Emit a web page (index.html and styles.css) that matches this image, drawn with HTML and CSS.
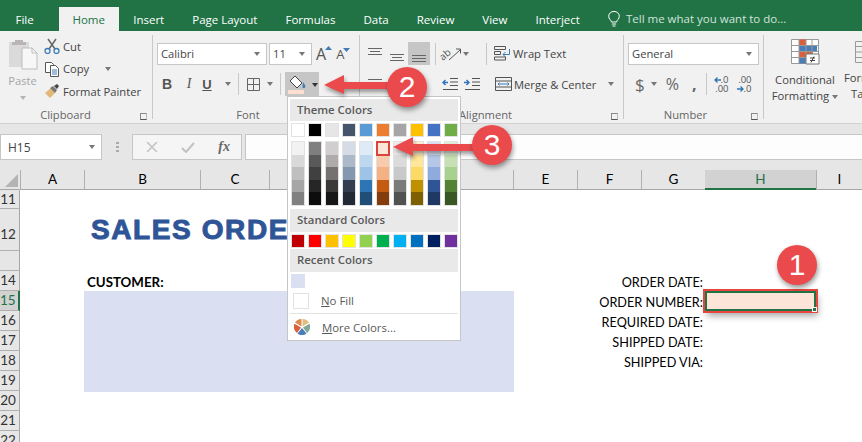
FILE: index.html
```html
<!DOCTYPE html>
<html lang="en">
<head>
  <meta charset="UTF-8">
  <title>Sales Order - Excel</title>
  <link rel="stylesheet" href="styles.css">
</head>
<body>
  <div class="tabs">
    <span class="tab tab-file">File</span>
    <span class="tab tab-home">Home</span>
    <span class="tab">Insert</span>
    <span class="tab">Page Layout</span>
    <span class="tab">Formulas</span>
    <span class="tab">Data</span>
    <span class="tab">Review</span>
    <span class="tab">View</span>
    <span class="tab">Interject</span>
    <span class="tell">
      <svg width="12" height="16" viewBox="0 0 12 16" fill="none" stroke="#fff"><path d="M3.5 11C3 9 .7 8 .7 5.2a5.3 4.8 0 0 1 10.6 0C11.300 8 9 9 8.500 11zM3.800 13h4.400M4.500 15h3"/></svg>
      Tell me what you want to do...
    </span>
  </div>

  <div class="ribbon">
    <!-- Clipboard -->
    <div class="group group-clipboard">
      <div class="group-body clip-body">
        <div class="paste">
          <svg width="30" height="32" viewBox="0 0 30 32"><path d="M1 4h20v25H1z" fill="#dcd9da"/><path d="M7 2h8v2h3v3H4V4h3z" fill="#b9b5b6"/><path d="M14 10h10l5 5v16H14z" fill="#f8f7f8" stroke="#bdbdbd"/><path d="M24 10v5h5" fill="none" stroke="#bdbdbd"/></svg>
          <span class="paste-text">Paste</span>
          <i class="caret caret-light"></i>
        </div>
        <div class="clip-list">
          <div class="clip-item">
            <svg width="16" height="16" viewBox="0 0 16 16" fill="none"><path d="M4 1l7 10M12 1L5 11" stroke="#666" stroke-width="1.500"/><circle cx="3.500" cy="13" r="2.500" stroke="#3f7cb8" stroke-width="1.300"/><circle cx="12.500" cy="13" r="2.500" stroke="#3f7cb8" stroke-width="1.300"/></svg>
            <span>Cut</span>
          </div>
          <div class="clip-item">
            <svg width="16" height="16" viewBox="0 0 16 16" fill="#fff" stroke="#555"><path d="M1.500 1.500h6l2 2v8h-8z"/><path d="M6.500 4.500h5l3 3v8h-8z"/><path d="M8 9h5M8 11h5M8 13h5" stroke="#3f7cb8"/></svg>
            <span>Copy</span>
            <i class="caret copy-caret"></i>
          </div>
          <div class="clip-item">
            <svg width="16" height="16" viewBox="0 0 16 16"><path d="M1 10l6-5 4 5-5 5z" fill="#e3b777"/><path d="M6 5l3-2 4 4-2 3z" fill="#777"/><path d="M10 3l3-2 2 2-2 3z" fill="#444"/></svg>
            <span>Format Painter</span>
          </div>
        </div>
      </div>
      <div class="group-label">Clipboard<i class="launcher"></i></div>
    </div>

    <!-- Font -->
    <div class="group group-font">
      <div class="group-body">
        <div class="row row-top">
          <div class="combo combo-font"><span>Calibri</span><i class="caret"></i></div>
          <div class="combo combo-size"><span>11</span><i class="caret"></i></div>
          <span class="grow-a big">A<svg class="tick" width="7" height="4" viewBox="0 0 7 4"><path d="M0 4l3.500-4L7 4z" fill="#3f7cb8"/></svg></span>
          <span class="grow-a small">A<svg class="tick" width="7" height="4" viewBox="0 0 7 4"><path d="M0 0l3.500 4L7 0z" fill="#3f7cb8"/></svg></span>
        </div>
        <div class="row row-bottom">
          <b class="fmt fmt-b">B</b>
          <i class="fmt fmt-i">I</i>
          <u class="fmt fmt-u">U</u>
          <i class="caret fmt-caret"></i>
          <span class="vsep sep-a"></span>
          <svg class="borders" width="13" height="13" viewBox="0 0 13 13" fill="none" stroke="#666"><path d="M.5.500h12v12H.5zM6.500.500v12M.5 6.500h12"/></svg>
          <i class="caret border-caret"></i>
          <span class="vsep sep-b"></span>
          <div class="fill-btn">
            <svg width="19" height="20" viewBox="0 0 19 20"><path d="M7 1l7 7-5 5-7-7z" fill="#fff" stroke="#444"/><path d="M15 7c2 3 3 4 2 5.500s-3 .5-2.500-1z" fill="#3f7cb8"/><path d="M0 15h16v4H0z" fill="#fbe0d2"/></svg>
            <i class="caret caret-dark"></i>
          </div>
        </div>
      </div>
      <div class="group-label label-font">Font</div>
    </div>

    <!-- Alignment -->
    <div class="group group-align">
      <div class="group-body">
        <div class="row row-top">
          <svg class="lines lines-top" width="14" height="8" viewBox="0 0 14 8" fill="none" stroke="#666"><path d="M0 .5h14M2 3.500h10M0 6.500h14"/></svg>
          <svg class="lines lines-mid" width="14" height="8" viewBox="0 0 14 8" fill="none" stroke="#666"><path d="M0 .5h14M2 3.500h10M0 6.500h14"/></svg>
          <div class="align-on"><svg width="14" height="7" viewBox="0 0 14 7" fill="none" stroke="#666"><path d="M0 .5h14M0 3.500h14M0 6.500h14"/></svg></div>
          <span class="vsep sep-c"></span>
          <svg class="orient" width="20" height="17" viewBox="0 0 20 17" fill="none" stroke="#555"><text x="0" y="14" transform="rotate(-40 3 14)" font-family="Open Sans, sans-serif" font-size="10" fill="#555" stroke="none">ab</text><path d="M7 15L18 5M14 4h4.500v4.500"/></svg>
          <i class="caret orient-caret"></i>
          <span class="vsep sep-d"></span>
          <svg class="wide-icon" width="17" height="15" viewBox="0 0 17 15" fill="none" stroke="#555"><path d="M.5.500h11v3H.5zM.5 5.500h6v3h-6zM.5 11h11v3H.5z"/><path d="M15.500 3v5.500H9m2.500-2.500L9 8.500l2.500 2.500" stroke="#3f7cb8"/></svg>
          <span class="action">Wrap Text</span>
        </div>
        <div class="row row-bottom">
          <svg class="lines lines-left" width="14" height="8" viewBox="0 0 14 8" fill="none" stroke="#666"><path d="M0 .5h14"/></svg>
          <svg class="indent" width="16" height="12" viewBox="0 0 16 12" fill="none" stroke="#555"><path d="M8 .5h8M8 4h8M8 7.500h8M1 11.500h15"/><path d="M6 4.500H1m2.500-2.500L1 4.500 3.500 7" stroke="#2e75b6" stroke-width="1.400"/></svg>
          <svg class="indent indent-two" width="16" height="12" viewBox="0 0 16 12" fill="none" stroke="#555"><path d="M8 .5h8M8 4h8M8 7.500h8M1 11.500h15"/><path d="M0 4.500h5m-2.500-2.500L5 4.500 2.500 7" stroke="#2e75b6" stroke-width="1.400"/></svg>
          <svg class="wide-icon merge" width="17" height="14" viewBox="0 0 17 14" fill="none" stroke="#555"><path d="M.5.500h16v13H.5zM.5 4h16M.5 10h16"/><path d="M3 7h11M4.500 5.500L3 7l1.500 1.500M12.500 5.500L14 7l-1.500 1.500" stroke="#3f7cb8"/></svg>
          <span class="action">Merge &amp; Center</span>
          <i class="caret merge-caret"></i>
        </div>
      </div>
      <div class="group-label label-align">Alignment<i class="launcher"></i></div>
    </div>

    <!-- Number -->
    <div class="group group-number">
      <div class="group-body">
        <div class="row row-top">
          <div class="combo combo-general"><span>General</span><i class="caret"></i></div>
        </div>
        <div class="row row-bottom">
          <span class="num-dollar">$</span>
          <i class="caret dollar-caret"></i>
          <span class="num-percent">%</span>
          <span class="num-comma">,</span>
          <span class="vsep sep-e"></span>
          <span class="dec">
            <span><svg width="7" height="6" viewBox="0 0 7 6" fill="none" stroke="#2e75b6" stroke-width="1.300"><path d="M7 3H1m2.500-2.500L1 3l2.500 2.500"/></svg>.0</span>
            <span>.00</span>
          </span>
          <span class="dec dec-two">
            <span>.00</span>
            <span><svg width="7" height="6" viewBox="0 0 7 6" fill="none" stroke="#2e75b6" stroke-width="1.300"><path d="M0 3h6M3.500.5L6 3 3.500 5.500"/></svg>.0</span>
          </span>
        </div>
      </div>
      <div class="group-label label-number">Number<i class="launcher"></i></div>
    </div>

    <!-- Styles, cut off by the window -->
    <div class="group-styles">
      <div class="style-btn">
        <svg width="29" height="26" viewBox="0 0 29 26"><path d="M.5.500h27v24H.5z" fill="#fff" stroke="#999"/><path d="M8 .5h7v6H8z" fill="#d9603b"/><path d="M8 6.500h18v6H8z" fill="#4a7eb8"/><path d="M8 12.500h14v6H8z" fill="#d9603b"/><path d="M8 18.500h7v6H8z" fill="#4a7eb8"/><path d="M.5 6.500h27M.5 12.500h27M.5 18.500h27M8 .5v24M15 .5v24M21 .5v24" stroke="#999" fill="none"/><path d="M15 15h13v10H15z" fill="#fff" stroke="#777"/><path d="M19 19h5M19 21.500h5M23 17.500l-3 6" stroke="#444" fill="none"/></svg>
        <span>Conditional</span>
        <span>Formatting<i class="caret style-caret"></i></span>
      </div>
      <div class="style-btn style-next">
        <svg width="29" height="22" viewBox="0 0 29 22" fill="none" stroke="#999"><path d="M.5.500h28v21H.5zM.5 5.500h28M.5 11h28M.5 16.500h28M8 .5v21"/></svg>
        <span>Form</span>
        <span class="table-word">Ta</span>
      </div>
    </div>
  </div>

  <div class="formula-bar">
    <div class="name-box"><span>H15</span><i class="caret"></i></div>
    <div class="grip"></div>
    <div class="fx-box">
      <svg width="12" height="10" viewBox="0 0 12 10" fill="none" stroke="#c4c4c4" stroke-width="1.600"><path d="M1 0l10 10M11 0L1 10"/></svg>
      <svg width="14" height="11" viewBox="0 0 14 11" fill="none" stroke="#c4c4c4" stroke-width="2.200"><path d="M1 6l4 4 8-9"/></svg>
      <em class="fx">fx</em>
    </div>
    <div class="formula-input"></div>
  </div>

  <div class="sheet">
    <div class="corner"><svg width="13" height="13" viewBox="0 0 13 13"><path d="M13 0v13H0z" fill="#b4b4b4"/></svg></div>
    <div class="col-head">A</div>
    <div class="col-head">B</div>
    <div class="col-head">C</div>
    <div class="col-head"></div>
    <div class="col-head">E</div>
    <div class="col-head">F</div>
    <div class="col-head">G</div>
    <div class="col-head col-on">H</div>
    <div class="col-head">I</div>

    <div class="row-head r11">11</div>
    <div class="row-head r12">12</div>
    <div class="row-head r13"></div>
    <div class="row-head r14">14</div>
    <div class="row-head r15 row-on">15</div>
    <div class="row-head r16">16</div>
    <div class="row-head r17">17</div>
    <div class="row-head r18">18</div>
    <div class="row-head r19">19</div>
    <div class="row-head r20">20</div>
    <div class="row-head r21">21</div>
    <div class="row-head r22">22</div>

    <div class="title">SALES ORDER</div>
    <div class="customer">CUSTOMER:</div>
    <div class="customer-fill"></div>
    <div class="field r14">ORDER DATE:</div>
    <div class="field r15">ORDER NUMBER:</div>
    <div class="field r16">REQUIRED DATE:</div>
    <div class="field r17">SHIPPED DATE:</div>
    <div class="field r18">SHIPPED VIA:</div>
    <div class="selected"><i class="handle"></i></div>
  </div>

  <!-- Fill colour dropdown -->
  <div class="menu">
    <div class="menu-head">Theme Colors</div>
    <div class="swatches" id="themeRow"></div>
    <div class="shades" id="shades"></div>
    <div class="menu-head head-standard">Standard Colors</div>
    <div class="swatches" id="standardRow"></div>
    <div class="menu-head head-recent">Recent Colors</div>
    <div class="swatches recent"><span class="swatch swatch-recent"></span></div>
    <div class="menu-item no-fill"><span class="no-fill-box"></span><span class="item-text"><u>N</u>o Fill</span></div>
    <div class="menu-item more">
      <svg width="16" height="16" viewBox="0 0 16 16"><path d="M7.500 7.500V0A7.500 7.500 0 0 0 1 3.500z" fill="#dd8a4e"/><path d="M8.500 7.500V0A7.500 7.500 0 0 1 15 3.500z" fill="#e3bd80"/><path d="M9 8.500l6.500-3.700A7.500 7.500 0 0 1 13 14z" fill="#7fa898"/><path d="M8 9l4.500 5.500a7.500 7.500 0 0 1-9 0z" fill="#4a7eb8"/><path d="M7 8.500L.5 4.800A7.500 7.500 0 0 0 3 14z" fill="#d9603b"/></svg>
      <span class="item-text"><u>M</u>ore Colors...</span>
    </div>
  </div>

  <!-- Callouts drawn over the screenshot -->
  <svg class="arrow arrow-two" width="88" height="22" viewBox="0 0 88 22"><path d="M0 11L20 1v7h68v7H20v5z" fill="#eb4a4d"/></svg>
  <svg class="arrow arrow-three" width="92" height="22" viewBox="0 0 92 22"><path d="M0 11L20 1v7h72v7H20v5z" fill="#eb4a4d"/></svg>
  <div class="badge badge-one">1</div>
  <div class="badge badge-two">2</div>
  <div class="badge badge-three">3</div>

  <script>
    const theme = ['#ffffff','#000000','#e7e6e6','#44546a','#5b9bd5','#ed7d31','#a5a5a5','#ffc000','#4472c4','#70ad47'];
    const standard = ['#c00000','#ff0000','#ffc000','#ffff00','#92d050','#00b050','#00b0f0','#0070c0','#002060','#7030a0'];
    const shades = [
      ['#f2f2f2','#d9d9d9','#bfbfbf','#a6a6a6','#808080'],
      ['#7f7f7f','#595959','#404040','#262626','#0d0d0d'],
      ['#d0cece','#afabab','#757171','#3b3838','#181717'],
      ['#d6dce5','#adb9ca','#8497b0','#333f50','#222a35'],
      ['#deebf7','#bdd7ee','#9dc3e6','#2e75b6','#1f4e79'],
      ['#fbe5d6','#f8cbad','#f4b183','#c55a11','#843c0c'],
      ['#ededed','#dbdbdb','#c9c9c9','#7b7b7b','#525252'],
      ['#fff2cc','#ffe699','#ffd966','#bf9000','#7f6000'],
      ['#dae3f3','#b4c7e7','#8faadc','#2f5597','#203864'],
      ['#e2f0d9','#c6e0b4','#a9d18e','#548235','#385723']
    ];

    function addSwatches(id, colors) {
      const row = document.getElementById(id);
      colors.forEach(color => {
        const el = document.createElement('span');
        el.className = 'swatch';
        el.style.background = color;
        row.appendChild(el);
      });
    }
    addSwatches('themeRow', theme);
    addSwatches('standardRow', standard);

    const shadeBox = document.getElementById('shades');
    shades.forEach((col, i) => {
      const colEl = document.createElement('span');
      colEl.className = 'shade-col';
      col.forEach((color, j) => {
        const el = document.createElement('span');
        el.className = 'shade';
        el.style.background = color;
        // picked colour in the orange column
        if (i === 5 && j === 0) el.classList.add('shade-picked');
        colEl.appendChild(el);
      });
      shadeBox.appendChild(colEl);
    });
  </script>
</body>
</html>
```

FILE: styles.css
```css
* {
  box-sizing: border-box;
}
html, body {
  margin: 0;
  height: 442px;
  overflow: hidden;
}
body {
  position: relative;
  width: 862px;
  background: #fff;
  font-family: "Open Sans", sans-serif;
  font-size: 11.200px;
  color: #444;
}

/* tabs */
.tabs {
  display: flex;
  height: 31px;
  background: #217346;
  color: #fff;
  padding-left: 1px;
  font-size: 11.500px;
  line-height: 26px;
  align-items: flex-end;
}
.tab {
  height: 24px;
  padding: 0 14px;
  white-space: nowrap;
}
.tab-file {
  margin-right: 11px;
  padding-left: 14.500px;
}
.tab-home {
  background: #f1f1f1;
  color: #217346;
  width: 60px;
  margin-right: 0.500px;
  padding: 0;
  text-align: center;
}
.tell {
  display: flex;
  align-items: center;
  gap: 6px;
  height: 24px;
  margin-left: 14px;
  color: #d3e3da;
  white-space: nowrap;
}

/* ribbon */
.ribbon {
  display: flex;
  height: 93px;
  padding-top: 4px;
  background: #f1f1f1;
  border-bottom: 1px solid #d2d2d2;
}
.group {
  position: relative;
  display: flex;
  flex-direction: column;
  height: 84px;
  border-right: 1px solid #c8c8c8;
}
.group-clipboard { width: 153px; }
.group-font { width: 207px; }
.group-align { width: 264px; }
.group-number { width: 140px; }
.group-body {
  flex: 1;
  min-height: 0;
}
.group-label {
  position: relative;
  height: 12px;
  padding-right: 21px;
  line-height: 16px;
  text-align: center;
  color: #666;
}
.label-font { padding-right: 16px; }
.label-align { padding-right: 12px; }
.label-number { padding-right: 16px; }
.launcher {
  position: absolute;
  right: 5px;
  top: 6px;
  width: 7px;
  height: 7px;
  border: 1px solid #888;
  border-right-color: #bbb;
  border-bottom-color: #555;
}
.row {
  display: flex;
  align-items: center;
}
.row-top {
  height: 23px;
  margin-top: 7px;
}
.row-bottom {
  height: 24px;
  margin-top: 7px;
}
.caret {
  display: inline-block;
  width: 0;
  height: 0;
  border: 3.500px solid transparent;
  border-top: 4px solid #777;
  border-bottom: 0;
}
.caret-light {
  border-top-color: #b5b5b5;
}
.caret-dark {
  border-top-color: #333;
}
.vsep {
  display: block;
  width: 1px;
  height: 22px;
  background: #c8c8c8;
}
.combo {
  display: flex;
  align-items: center;
  justify-content: space-between;
  height: 22px;
  background: #fff;
  border: 1px solid #c6c6c6;
  padding: 0 6px 0 3px;
  font-size: 11.200px;
  color: #444;
}

/* clipboard */
.clip-body {
  display: flex;
}
.paste {
  display: flex;
  flex-direction: column;
  align-items: center;
  width: 40px;
  margin-left: 1px;
  padding: 3px 0 0 3px;
  color: #a6a6a6;
}
.paste-text {
  margin-top: 3px;
  line-height: 16px;
}
.paste .caret {
  margin-top: 7px;
}
.clip-list {
  margin-left: 3px;
}
.clip-item {
  display: flex;
  align-items: center;
  gap: 3px;
  height: 22.500px;
  white-space: nowrap;
}
.copy-caret {
  margin-left: 13px;
}

/* font */
.group-font .row {
  padding-left: 4px;
}
.combo-font {
  width: 110px;
}
.combo-size {
  width: 43px;
  margin-left: 2px;
}
.grow-a {
  position: relative;
  color: #555;
}
.grow-a.big {
  font-size: 16px;
  margin-left: 4px;
}
.grow-a.small {
  font-size: 13px;
  margin-left: 10px;
}
.tick {
  position: absolute;
  top: 3px;
  left: 100%;
  margin-left: -1px;
}
.fmt {
  width: 14px;
  text-align: center;
  font-size: 13px;
  color: #555;
}
.fmt-b { margin-left: 3px; font-family: "Liberation Sans", sans-serif; font-size: 14px; }
.fmt-i { margin-left: 8px; font-family: "Liberation Serif", serif; font-size: 14px; }
.fmt-u { margin-left: 4px; font-weight: bold; font-family: "Liberation Sans", sans-serif; }
.fmt-caret { margin-left: 11px; }
.sep-a { margin-left: 7px; }
.borders { margin-left: 8px; }
.border-caret { margin-left: 7px; }
.sep-b { margin-left: 7px; }
.fill-btn {
  display: flex;
  align-items: center;
  gap: 5px;
  width: 34px;
  height: 24px;
  margin-left: 4px;
  padding: 2px 0 0 3px;
  background: #c6c6c6;
}

/* alignment */
.group-align .row {
  padding-left: 8px;
}
.lines-mid {
  margin-left: 8px;
  margin-top: 8px;
}
.lines-top {
  margin-top: -4px;
}
.align-on {
  display: flex;
  justify-content: center;
  align-items: flex-end;
  width: 22px;
  height: 23px;
  margin-left: 4px;
  padding-bottom: 3px;
  background: #c6c6c6;
}
.sep-c { margin-left: 5px; }
.orient { margin-left: 6px; overflow: visible; }
.orient-caret { margin-left: 1px; }
.sep-d { margin-left: 17px; }
.wide-icon { margin-left: 7px; }
.action {
  margin-left: 2px;
  white-space: nowrap;
}
.lines-left {
  margin-top: -2px;
}
.indent { margin-left: 60px; }
.indent-two { margin-left: 6px; }
.merge { margin-left: 15px; }
.merge-caret { margin-left: 12px; }

/* number */
.group-number .row {
  padding-left: 4px;
}
.combo-general {
  width: 131px;
}
.num-dollar {
  margin-left: 7px;
  font-size: 17px;
  color: #666;
}
.dollar-caret { margin-left: 6px; }
.num-percent {
  margin-left: 9px;
  font-size: 16px;
  color: #666;
}
.num-comma {
  margin-left: 13px;
  font-size: 16px;
  font-weight: bold;
  line-height: 14px;
  color: #666;
}
.sep-e { margin-left: 9px; }
.dec {
  display: flex;
  flex-direction: column;
  align-items: flex-end;
  width: 16px;
  margin-left: 6px;
  font-size: 9.500px;
  line-height: 9px;
  color: #555;
}
.dec-two { margin-left: 7px; }

/* styles */
.group-styles {
  display: flex;
  flex: 1;
  overflow: hidden;
}
.style-btn {
  display: flex;
  flex-direction: column;
  align-items: center;
  flex: none;
  width: 76px;
  padding-top: 4px;
  margin-left: 3px;
  line-height: 16px;
  white-space: nowrap;
}
.style-btn svg {
  margin-bottom: 7px;
}
.style-caret {
  margin-left: 3px;
  vertical-align: middle;
}
.style-next {
  align-items: flex-start;
  margin-left: 0;
  padding-left: 1px;
}
.style-next svg {
  margin: 2px 0 7px 11px;
}
.table-word {
  margin-left: 7px;
}

/* formula bar */
.formula-bar {
  display: flex;
  height: 46px;
  padding-top: 10px;
  background: #e6e6e6;
}
.name-box {
  display: flex;
  align-items: center;
  justify-content: space-between;
  width: 102px;
  height: 26px;
  padding: 0 6px 0 7px;
  background: #fff;
  border: 1px solid #c6c6c6;
  font-size: 12px;
}
.grip {
  width: 3px;
  height: 10px;
  margin: 8px 13px 0 14px;
  background: repeating-linear-gradient(#aaa 0 2px, transparent 2px 4px);
}
.fx-box {
  display: flex;
  align-items: center;
  justify-content: space-between;
  width: 110px;
  height: 26px;
  padding: 0 11px 0 13px;
  background: #f5f5f5;
  border: 1px solid #c6c6c6;
}
.fx {
  font-family: "Liberation Serif", serif;
  font-size: 14px;
  font-weight: bold;
  color: #666;
}
.formula-input {
  flex: 1;
  height: 26px;
  margin-left: 3px;
  background: #fdfdfd;
  border: 1px solid #c6c6c6;
  border-right: 0;
}

/* sheet */
.sheet {
  display: grid;
  grid-template-columns: 20px 64px 116px 69px 244px 64px 64px 64px 111px 46px;
  grid-template-rows: 20px 19px 42px 20px repeat(8, 20px) 20px;
  font-family: Lato, sans-serif;
  font-size: 13.500px;
  color: #000;
}
.corner {
  grid-column: 1;
  grid-row: 1;
  padding: 4px 0 0 5px;
  background: #e6e6e6;
  border-bottom: 1px solid #a6a6a6;
  border-right: 1px solid #e6e6e6;
}
.col-head {
  grid-row: 1;
  text-align: center;
  line-height: 19px;
  background: #e6e6e6;
  border-left: 1px solid #b0b0b0;
  border-bottom: 1px solid #a6a6a6;
}
.col-on {
  background: #d2d2d2;
  color: #217346;
  border-left: 0;
  border-bottom: 2px solid #217346;
}
.row-head {
  grid-column: 1;
  padding-right: 3px;
  text-align: center;
  line-height: 19px;
  color: #333;
  background: #e6e6e6;
  border-right: 1px solid #a6a6a6;
  border-bottom: 1px solid #b0b0b0;
}
.row-on {
  background: #d2d2d2;
  color: #217346;
  border-right: 2px solid #217346;
}
.r11 { grid-row: 2; }
.r12 { grid-row: 3; line-height: 51px; }
.r13 { grid-row: 4; }
.r14 { grid-row: 5; }
.r15 { grid-row: 6; }
.r16 { grid-row: 7; }
.r17 { grid-row: 8; }
.r18 { grid-row: 9; }
.r19 { grid-row: 10; }
.r20 { grid-row: 11; }
.r21 { grid-row: 12; }
.r22 { grid-row: 13; }
.title {
  grid-column: 3 / 7;
  grid-row: 3;
  padding: 2px 0 0 7px;
  font-family: "Liberation Sans", sans-serif;
  font-size: 28px;
  font-weight: bold;
  line-height: 38px;
  letter-spacing: 1.600px;
  color: #2f5597;
  -webkit-text-stroke: 1px #2f5597;
  white-space: nowrap;
}
.customer {
  grid-column: 3 / 5;
  grid-row: 5;
  padding-left: 3px;
  font-size: 13.300px;
  font-weight: bold;
  line-height: 22px;
}
.customer-fill {
  grid-column: 3 / 6;
  grid-row: 6 / 11;
  margin: 0 -1px -1px 0;
  background: #dae0f1;
}
.field {
  grid-column: 6 / 9;
  padding-right: 2px;
  font-size: 12.700px;
  text-align: right;
  line-height: 22px;
  white-space: nowrap;
}
.selected {
  position: relative;
  grid-column: 9;
  grid-row: 6;
  background: #fde4d8;
  border: 2px solid #217346;
  outline: 2px solid #e8453f;
  outline-offset: 0;
  box-shadow: 2px 5px 7px rgba(0, 0, 0, 0.35);
}
.handle {
  position: absolute;
  right: -3px;
  bottom: -3px;
  width: 5px;
  height: 5px;
  background: #217346;
  border: 1px solid #fff;
}

/* colour menu */
.menu {
  position: absolute;
  left: 287px;
  top: 96px;
  width: 174px;
  height: 245px;
  padding: 2px;
  background: #fff;
  border: 1px solid #c6c6c6;
  color: #595959;
  font-size: 11.400px;
}
.menu-head {
  height: 23px;
  padding-left: 7px;
  line-height: 22px;
  font-weight: 600;
  background: #e9e9e9;
}
.menu-head:first-child {
  height: 22px;
}
.head-standard {
  margin-top: 3px;
}
.head-recent {
  margin-top: 1px;
}
.swatches {
  display: flex;
  gap: 3px;
  height: 14px;
  margin-top: 2px;
  padding-left: 1px;
}
.swatch {
  width: 14px;
  height: 14px;
  border: 1px solid #e2e2e2;
}
.swatch-recent {
  background: #dae0f1;
  border-color: #dae0f1;
}
.shades {
  display: flex;
  gap: 3px;
  margin-top: 4px;
  padding-left: 1px;
}
.shade-col {
  display: flex;
  flex-direction: column;
  width: 14px;
  height: 65px;
  border: 1px solid #e2e2e2;
}
.shade {
  flex: 1;
}
.shade-picked {
  position: relative;
  outline: 2px solid #d9443f;
  outline-offset: -1px;
}
.menu-item {
  display: flex;
  align-items: center;
  white-space: nowrap;
}
.item-text {
  margin-left: 12px;
}
.no-fill {
  height: 26px;
  padding-left: 3px;
  border-bottom: 1px solid #e2e2e2;
}
.no-fill-box {
  width: 16px;
  height: 16px;
  background: #fff;
  border: 1px solid #e2e2e2;
}
.more {
  height: 26px;
  padding-left: 4px;
}

/* callouts */
.arrow {
  position: absolute;
  overflow: visible;
  filter: drop-shadow(1px 3px 2px rgba(0, 0, 0, 0.4));
}
.arrow-two {
  left: 324px;
  top: 74px;
}
.arrow-three {
  left: 393px;
  top: 136px;
}
.badge {
  position: absolute;
  width: 40px;
  height: 40px;
  border-radius: 50%;
  background: #eb4a4d;
  color: #fff;
  text-align: center;
  font-family: "Liberation Sans", sans-serif;
  font-size: 30px;
  line-height: 40px;
  box-shadow: 1px 3px 5px rgba(0, 0, 0, 0.4);
}
.badge-one {
  left: 777px;
  top: 245px;
}
.badge-two {
  left: 387px;
  top: 67px;
}
.badge-three {
  left: 472px;
  top: 125px;
}
```
